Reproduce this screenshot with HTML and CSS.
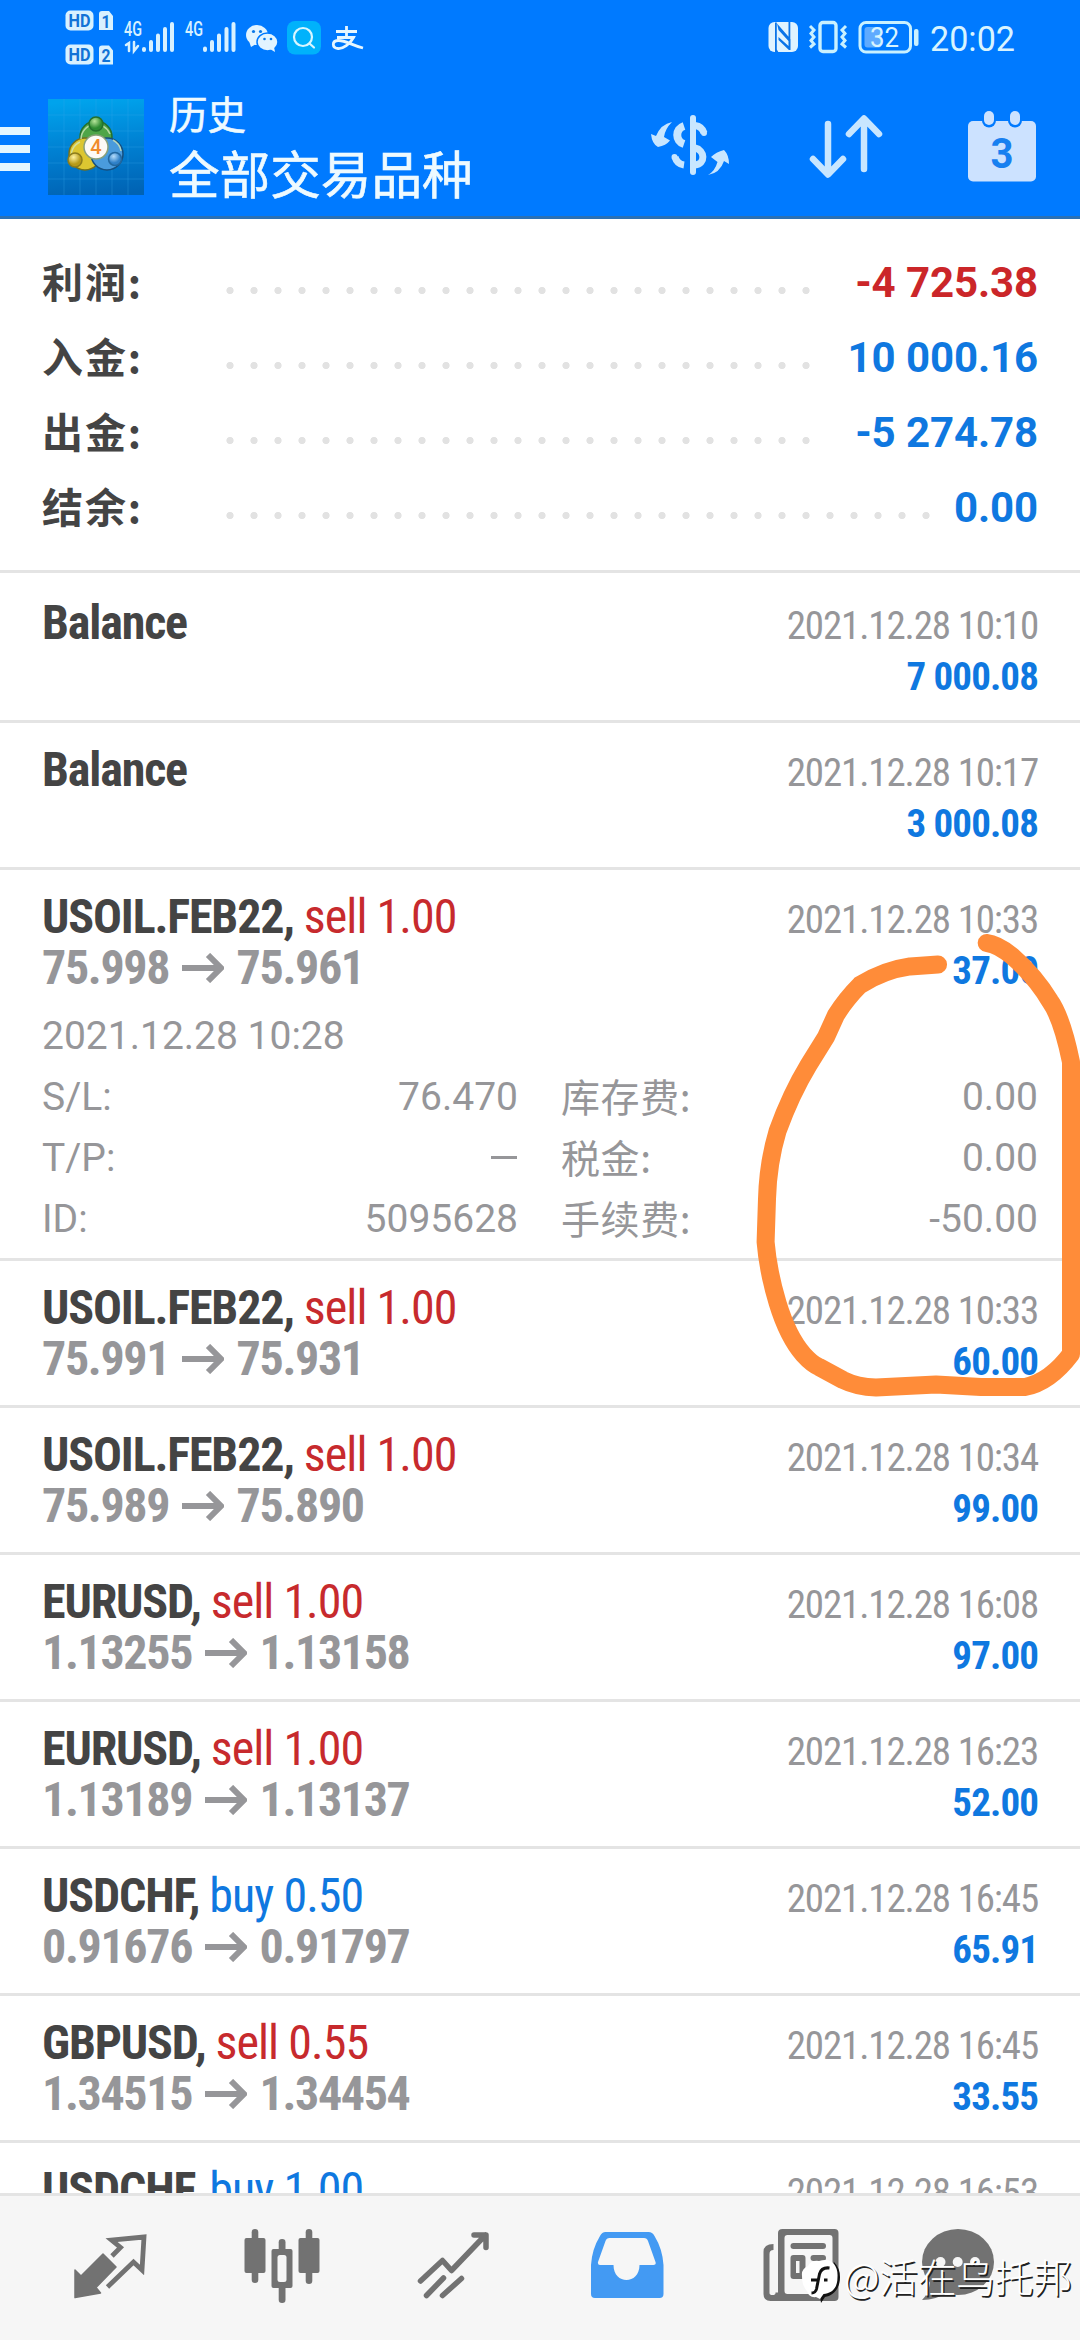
FILE: index.html
```html
<!DOCTYPE html>
<html lang="zh-CN">
<head>
<meta charset="utf-8">
<title>历史</title>
<link rel="stylesheet" href="styles.css">
</head>
<body>
<div class="app">
  <header class="top">
    <div class="status">
      <svg class="status-left" viewBox="0 0 370 76" width="370" height="76">
        <g fill="#d8f1ff">
          <rect x="65.500" y="10.500" width="28" height="20" rx="5"/>
          <rect x="65.500" y="44.500" width="28" height="20" rx="5"/>
          <path d="M102 11h7l4 5v14h-14v-16q0-3 3-3zM102 45.500h7l4 5v14h-14v-16q0-3 3-3z"/>
        </g>
        <g class="st-badge">
          <text x="68.500" y="27" textLength="22" lengthAdjust="spacingAndGlyphs">HD</text>
          <text x="68.500" y="61" textLength="22" lengthAdjust="spacingAndGlyphs">HD</text>
          <text x="101.500" y="27.500" textLength="9" lengthAdjust="spacingAndGlyphs">1</text>
          <text x="101.500" y="61.500" textLength="9" lengthAdjust="spacingAndGlyphs">2</text>
        </g>
        <g class="st-net">
          <text x="124" y="36" textLength="18" lengthAdjust="spacingAndGlyphs">4G</text>
          <text x="185" y="36" textLength="18" lengthAdjust="spacingAndGlyphs">4G</text>
        </g>
        <g stroke="#d8f1ff" stroke-width="4" stroke-linecap="round" fill="none">
          <path d="M144 49v1M151 42v8M158 35.500v14.500M165 29v21M172 24v26"/>
          <path d="M205 48.500v1.500M212 42v8M219 35.500v14.500M226.500 29v21M233.500 24v26"/>
          <path stroke-width="2.500" d="M126 45l3-2v8M134 42v9l4-5"/>
        </g>
        <g fill="#e2f4ff">
          <ellipse cx="257" cy="35" rx="11" ry="10"/><path d="M249 41l2 6 5-3z"/>
          <ellipse cx="267.500" cy="42" rx="10.500" ry="9" stroke="#007aff" stroke-width="1.500"/><path d="M270 49l5 3-1-5z"/>
        </g>
        <g fill="#0a78e8"><circle cx="253.500" cy="31.500" r="1.600"/><circle cx="260.500" cy="31.500" r="1.600"/><circle cx="264.500" cy="39" r="1.300"/><circle cx="271" cy="39" r="1.300"/></g>
        <rect x="287" y="21" width="34" height="33.500" rx="8" fill="#00b2fb"/>
        <g fill="none" stroke="#d8f6ff" stroke-width="2.200" stroke-linecap="round"><circle cx="303" cy="37" r="9"/><path d="M309.500 43.500l4.500 4"/></g>
        <g fill="none" stroke="#e6f6ff" stroke-width="2.800"><path d="M336 31.500h21M346.500 26v11M337 37.500h16.500C350 44 343 49 338 48.500c-6-.500-6.500-7.500 0-8 7-.500 13 4.500 25 7.500"/></g>
      </svg>
      <svg class="status-right" viewBox="760 0 320 76" width="320" height="76">
        <rect x="768.500" y="22" width="29.500" height="30" rx="6" fill="#dff3ff"/>
        <path fill="#0a74e8" d="M775 22.500h1.800v27l1.500 2.500h-3.300zM777 23.500l13.500 15.500v11h-1.600l-10.400-10v-3l10 9v-5l-10-11zM788.500 22h1.800v24h-1.800z"/>
        <g fill="none" stroke="#c9f1ff">
          <rect x="820" y="22.500" width="16" height="29" rx="3" stroke-width="3.400"/>
          <path stroke-width="3" d="M810 26l4 4-3 3.500 3 3.500-3 3.500 3 3.500-4 3.500M846 26l-4 4 3 3.500-3 3.500 3 3.500-3 3.500 4 3.500"/>
          <rect x="860" y="22.500" width="50.500" height="29.500" rx="6" stroke-width="3"/>
        </g>
        <rect x="864.500" y="27" width="17" height="20.500" rx="3" fill="#5fabff"/>
        <rect x="914" y="29" width="4.500" height="17" rx="2" fill="#c9f1ff"/>
        <text class="st-batt" x="870" y="46.500" textLength="29" lengthAdjust="spacingAndGlyphs">32</text>
        <text class="st-time" x="930" y="51" textLength="85" lengthAdjust="spacingAndGlyphs">20:02</text>
      </svg>
    </div>
    <div class="toolbar">
      <div class="burger"><i></i><i></i><i></i></div>
      <svg class="logo" viewBox="0 0 96 96" width="96" height="96">
        <defs>
          <linearGradient id="sky" x1=".5" y1="0" x2=".6" y2="1"><stop offset="0" stop-color="#00a3ec"/><stop offset=".5" stop-color="#0080d2"/><stop offset="1" stop-color="#0063b4"/></linearGradient>
          <radialGradient id="gr" cx=".4" cy=".3"><stop offset="0" stop-color="#b6e59a"/><stop offset="1" stop-color="#2e8b32"/></radialGradient>
          <radialGradient id="ye" cx=".4" cy=".3"><stop offset="0" stop-color="#fff3a0"/><stop offset="1" stop-color="#b79a18"/></radialGradient>
          <radialGradient id="bl" cx=".4" cy=".3"><stop offset="0" stop-color="#b5dcfa"/><stop offset="1" stop-color="#2e80c8"/></radialGradient>
        </defs>
        <rect width="96" height="96" fill="url(#sky)"/>
        <path d="M0 16h96M0 32h96M0 48h96M0 64h96M0 80h96M16 0v96M32 0v96M48 0v96M64 0v96M80 0v96" stroke="#36a9e8" stroke-opacity=".3" fill="none"/>
        <g stroke-width="1.500">
          <circle cx="48" cy="38" r="16" fill="#4fa548" stroke="#24702d"/>
          <circle cx="37" cy="55" r="16" fill="#dcc631" stroke="#75701b"/>
          <circle cx="59" cy="55" r="16" fill="#4a9bdc" stroke="#164f7e"/>
          <path d="M33 40a15 15 0 0 1 29-5M24 60a14 14 0 0 1 8-17M73 52a15 15 0 0 0-8-11" stroke="#cfe6b8" stroke-width="1.500" fill="none" opacity=".8"/>
          <circle cx="48" cy="25" r="7" fill="url(#gr)" stroke="#24702d"/>
          <circle cx="27" cy="61" r="7" fill="url(#ye)" stroke="#8c7c1d"/>
          <circle cx="67" cy="60" r="6.500" fill="url(#bl)" stroke="#2368a0"/>
          <circle cx="48" cy="48" r="12" fill="#fdfaf6" stroke="#8aa07a"/>
        </g>
        <text class="logo-four" x="48" y="55" text-anchor="middle">4</text>
      </svg>
      <div class="titles">
        <div class="title-small">历史</div>
        <div class="title-big">全部交易品种</div>
      </div>
      <div class="actions">
        <svg viewBox="645 105 90 80" width="90" height="80">
          <g fill="none" stroke="#c8e6ff">
            <path d="M693 118v54" stroke-width="6" stroke-linecap="round"/>
            <path d="M684 126C675 129 675 141 684 144" stroke-width="8"/>
            <path d="M675 157q2 7 9 8" stroke-width="7"/>
            <path d="M674.500 157v.1M704 133v.1" stroke-width="6" stroke-linecap="round"/>
            <path d="M695 125.500q7 1 9 7.500" stroke-width="7"/>
            <path d="M695 148c10 2 11 16 0 17" stroke-width="7"/>
          </g>
          <path fill="#c8e6ff" d="M651 134l5 2q5-12 16-14-7 7-8 15l6 3.500q-4 5-12 6.500-6-3-7-13zM708 175q7-4 9.500-13l-6.500-5q5-5 13-7 5 5 5 14l-5-3q-4 12-16 14z"/>
        </svg>
        <svg viewBox="800 105 90 80" width="90" height="80">
          <path fill="none" stroke="#c8e6ff" stroke-width="6.500" stroke-linecap="round" stroke-linejoin="round" d="M828 124v49M813 159l15 15.500 15-15.500M864 169v-49M849 134l15-15.500 15 15.500"/>
        </svg>
        <svg viewBox="960 105 90 80" width="90" height="80">
          <rect x="968" y="121" width="68" height="60.500" rx="5" fill="#cce2ff"/>
          <rect x="982" y="109" width="14" height="18.500" rx="7" fill="#007aff"/><rect x="1008" y="109" width="14" height="18.500" rx="7" fill="#007aff"/>
          <rect x="984" y="111" width="10" height="14" rx="5" fill="#cce2ff"/><rect x="1010" y="111" width="10" height="14" rx="5" fill="#cce2ff"/>
          <text class="cal-day" x="1002" y="168" text-anchor="middle" textLength="23" lengthAdjust="spacingAndGlyphs">3</text>
        </svg>
      </div>
    </div>
  </header>

  <section class="summary">
    <div class="sum-row"><span class="sum-label">利润:</span><span class="dots"></span><span class="sum-val neg">-4 725.38</span></div>
    <div class="sum-row"><span class="sum-label">入金:</span><span class="dots"></span><span class="sum-val">10 000.16</span></div>
    <div class="sum-row"><span class="sum-label">出金:</span><span class="dots"></span><span class="sum-val">-5 274.78</span></div>
    <div class="sum-row"><span class="sum-label">结余:</span><span class="dots long"></span><span class="sum-val">0.00</span></div>
  </section>

  <main class="deals">
    <article class="deal first">
      <div class="line"><span class="sym">Balance</span><span class="date">2021.12.28 10:10</span></div>
      <div class="line"><span></span><span class="profit">7 000.08</span></div>
    </article>
    <article class="deal">
      <div class="line"><span class="sym">Balance</span><span class="date">2021.12.28 10:17</span></div>
      <div class="line"><span></span><span class="profit">3 000.08</span></div>
    </article>
    <article class="deal open">
      <div class="line"><span class="sym">USOIL.FEB22, <span class="sell">sell 1.00</span></span><span class="date">2021.12.28 10:33</span></div>
      <div class="line"><span class="price">75.998 <svg class="arr" viewBox="0 0 42 30"><path d="M0 15h38M26 2l13 13-13 13"/></svg> 75.961</span><span class="profit">37.00</span></div>
      <div class="detail">
        <span class="wide">2021.12.28 10:28</span>
        <span>S/L:</span><span class="num">76.470</span><span class="fee">库存费:</span><span class="num">0.00</span>
        <span>T/P:</span><span class="num"><i class="dash"></i></span><span class="fee">税金:</span><span class="num">0.00</span>
        <span>ID:</span><span class="num">5095628</span><span class="fee">手续费:</span><span class="num">-50.00</span>
      </div>
    </article>
    <article class="deal">
      <div class="line"><span class="sym">USOIL.FEB22, <span class="sell">sell 1.00</span></span><span class="date">2021.12.28 10:33</span></div>
      <div class="line"><span class="price">75.991 <svg class="arr" viewBox="0 0 42 30"><path d="M0 15h38M26 2l13 13-13 13"/></svg> 75.931</span><span class="profit">60.00</span></div>
    </article>
    <article class="deal">
      <div class="line"><span class="sym">USOIL.FEB22, <span class="sell">sell 1.00</span></span><span class="date">2021.12.28 10:34</span></div>
      <div class="line"><span class="price">75.989 <svg class="arr" viewBox="0 0 42 30"><path d="M0 15h38M26 2l13 13-13 13"/></svg> 75.890</span><span class="profit">99.00</span></div>
    </article>
    <article class="deal">
      <div class="line"><span class="sym">EURUSD, <span class="sell">sell 1.00</span></span><span class="date">2021.12.28 16:08</span></div>
      <div class="line"><span class="price">1.13255 <svg class="arr" viewBox="0 0 42 30"><path d="M0 15h38M26 2l13 13-13 13"/></svg> 1.13158</span><span class="profit">97.00</span></div>
    </article>
    <article class="deal">
      <div class="line"><span class="sym">EURUSD, <span class="sell">sell 1.00</span></span><span class="date">2021.12.28 16:23</span></div>
      <div class="line"><span class="price">1.13189 <svg class="arr" viewBox="0 0 42 30"><path d="M0 15h38M26 2l13 13-13 13"/></svg> 1.13137</span><span class="profit">52.00</span></div>
    </article>
    <article class="deal">
      <div class="line"><span class="sym">USDCHF, <span class="buy">buy 0.50</span></span><span class="date">2021.12.28 16:45</span></div>
      <div class="line"><span class="price">0.91676 <svg class="arr" viewBox="0 0 42 30"><path d="M0 15h38M26 2l13 13-13 13"/></svg> 0.91797</span><span class="profit">65.91</span></div>
    </article>
    <article class="deal">
      <div class="line"><span class="sym">GBPUSD, <span class="sell">sell 0.55</span></span><span class="date">2021.12.28 16:45</span></div>
      <div class="line"><span class="price">1.34515 <svg class="arr" viewBox="0 0 42 30"><path d="M0 15h38M26 2l13 13-13 13"/></svg> 1.34454</span><span class="profit">33.55</span></div>
    </article>
    <article class="deal">
      <div class="line"><span class="sym">USDCHF, <span class="buy">buy 1.00</span></span><span class="date">2021.12.28 16:53</span></div>
    </article>
  </main>

  <nav class="tabs">
    <svg viewBox="65 2220 90 90"><path fill="#727272" stroke="#727272" stroke-width="1.500" stroke-linejoin="round" d="M75 2270l6 6 22-22 13 13-20 20.500 4.500 5.500-25.500 4.500z"/><path fill="none" stroke="#727272" stroke-width="4.800" d="M112 2256l8.500-8.500-9-7.500 32.500-3-2 33-8.500-8-26 25"/></svg>
    <svg viewBox="236.500 2220 90 90"><g fill="#727272"><rect x="251.200" y="2229" width="6.600" height="54" rx="3.300"/><rect x="244" y="2238" width="21" height="35" rx="2"/><rect x="278.200" y="2239" width="6.800" height="64" rx="3.300"/><rect x="271" y="2249" width="21" height="39" rx="2"/><rect x="305.200" y="2229" width="6.600" height="55" rx="3.300"/><rect x="298" y="2238" width="21" height="35" rx="2"/></g><rect x="277" y="2255" width="9" height="27" rx="2.500" fill="#f6f6f6"/></svg>
    <svg viewBox="409 2220 90 90"><path fill="none" stroke="#727272" stroke-width="5.500" stroke-linecap="round" stroke-linejoin="round" d="M420.500 2281l22-20.500 9 10 34-35.500M474 2235h12v12.500M426.500 2295.500l17-17.500M442.500 2295.500l19-17"/></svg>
    <svg viewBox="581.500 2220 90 90"><path fill="#439af3" fill-rule="evenodd" d="M605 2232h43q4 0 6 4 8 13 9 29v29q0 4-4 4h-64.500q-4 0-4-4v-29q1-16 9-29 2-4 5.500-4zM609 2238q-3 0-4 3l-7.500 21q-.5 3 2 3h13.500c0 20 26 20 26 0h14q3 0 2-3l-7.500-21q-1-3-4-3z"/></svg>
    <svg viewBox="755.500 2220 90 90"><g fill="#727272"><path fill-rule="evenodd" d="M782 2229h52q4 0 4 4v64q0 4-4 4h-64q-7 0-7-7v-42q0-8 10-8v6q-4 0-4 4v39q0 2 3 2t3-2v-.5h2.500V2233q0-4 4.500-4zM787 2235q-3 0-3 3v53q0 3 3 3h42q3 0 3-3v-53q0-3-3-3z"/><rect x="790" y="2243" width="35.500" height="6" rx="3"/><path fill-rule="evenodd" d="M793 2255h9q3 0 3 3v18q0 3-3 3h-9q-3 0-3-3v-18q0-3 3-3zM795.500 2261v12h3.500v-12z"/><rect x="810" y="2255" width="15.500" height="6" rx="3"/></g></svg>
    <svg viewBox="913 2220 90 90"><ellipse cx="958" cy="2262" rx="36" ry="33" fill="#727272"/><path fill="#727272" d="M930 2280q0 12-8 20 14 0 26-8z"/><g fill="#f6f6f6"><circle cx="940.500" cy="2262" r="5"/><circle cx="957.700" cy="2262" r="5"/><circle cx="975" cy="2262" r="5"/></g></svg>
  </nav>

  <div class="watermark">
    <svg viewBox="800 2256 42 48" width="42" height="48">
      <path fill="#111" d="M834 2262q6 6 6 15c0 13-8 19-15 20l-4 6-1-7z"/>
      <path fill="#fff" d="M802 2276q-1-7 6-10 3-6 11-5 10-3 15 3 4 5 3.500 13c0 12-6 16-14 17l-3.500 5-4-2q-7 1-9-6-5-5-5-15z"/>
      <path fill="none" stroke="#111" stroke-width="3" d="M829.500 2268q-8-1-10 6l-3 15q-1 4-5 4M811 2280h8M824 2280h3.500"/>
    </svg>
    <span>@活在乌托邦</span>
  </div>

  <svg class="scribble" viewBox="740 920 340 480" width="340" height="480">
    <path d="M938 964.600L910 966.400Q884 970 860 985Q846 999 836 1015L826 1037L808.600 1065Q791 1094 777.600 1131Q768 1163 767 1199L765.600 1242Q768 1271 777.600 1303Q788 1337 803.500 1354.600Q812 1364 819 1367L843 1380Q857 1387 876 1387.500L936 1384.600L981 1387H1025Q1050 1382 1071 1354V1062Q1062 1018 1050 1001Q1035 976 1012 956Q997 944 986.700 943"/>
  </svg>
</div>
</body>
</html>
```

FILE: styles.css
```css
* { box-sizing: border-box; }

body {
  margin: 0;
  background: #fff;
  font-family: "Roboto", "Noto Sans CJK SC", sans-serif;
}

.app {
  position: relative;
  display: flex;
  flex-direction: column;
  width: 1080px;
  height: 2340px;
  overflow: hidden;
  background: #fff;
}

/* header */
.top {
  flex: none;
  height: 219px;
  background: #007aff;
  border-bottom: 3px solid #2b71b5;
}

.status { display: flex; justify-content: space-between; height: 76px; }
.status svg { display: block; }
.st-badge { font: 700 19px "Roboto", sans-serif; fill: #1273d6; }
.st-net { font: 500 20px "Roboto", sans-serif; fill: #d8f1ff; }
.st-batt { font: 400 27px "Roboto", sans-serif; fill: #d8f4ff; }
.st-time { font: 400 35px "Roboto", sans-serif; fill: #d8f4ff; }

.toolbar { display: flex; height: 140px; }
.burger { display: flex; flex-direction: column; gap: 10px; width: 48px; padding-top: 51px; }
.burger i { width: 30px; height: 8px; background: #e4f6ff; }
.logo { display: block; margin-top: 23px; }
.logo-four { font: 500 20px "Roboto", sans-serif; fill: #f08b2c; }
.titles {
  margin-left: 25px;
  color: #eefaff;
  font-family: "Noto Sans CJK SC", sans-serif;
  white-space: nowrap;
  -webkit-text-stroke: 0.6px #eefaff;
}
.title-small { margin-top: 11px; font-size: 38.5px; line-height: 50px; }
.title-big { font-size: 50.6px; line-height: 70px; }
.actions { display: flex; gap: 65px; margin: 29px 30px 0 auto; }
.actions svg:last-child { margin-left: 5px; }
.cal-day { font: 700 43px "Roboto", sans-serif; fill: #1880f0; }

/* totals */
.summary {
  flex: none;
  height: 354px;
  padding: 26px 42px 0 42px;
  border-bottom: 3px solid #e4e4e4;
}
.sum-row { display: flex; height: 75px; font-size: 42px; line-height: 75px; font-weight: 700; white-space: nowrap; }
.sum-label { width: 176px; font-family: "Noto Sans CJK SC", sans-serif; font-size: 41px; line-height: 71px; letter-spacing: 1.9px; color: #444; }
.dots {
  width: 600px;
  height: 9px;
  margin-top: 41px;
  background: radial-gradient(circle at 12px 4.5px, #e2e2e2 3.2px, transparent 4px) 0 0 / 24px 9px repeat-x;
}
.dots.long { width: 720px; }
.sum-val { margin-left: auto; letter-spacing: -0.1px; color: #0f78e0; }
.sum-val.neg { color: #cb2629; }

/* deal list */
.deals { flex: 1; min-height: 0; overflow: hidden; }
.deal { height: 147px; padding: 21px 42px 0 42px; border-bottom: 3px solid #e4e4e4; }
.deal.first { height: 150px; padding-top: 24px; }
.deal.open { height: 391px; }
.line { display: flex; justify-content: space-between; height: 51px; line-height: 51px; white-space: nowrap; }
.sym, .price, .date, .profit { font-family: "Roboto Condensed", "Roboto", sans-serif; font-stretch: 75%; letter-spacing: -1.15px; }
.sym { font-size: 48px; font-weight: 700; color: #444; }
.sell, .buy { font-weight: 400; letter-spacing: -0.95px; }
.sell { color: #c72a2d; }
.buy { color: #0f78e0; }
.price { font-size: 48px; font-weight: 700; letter-spacing: -1.35px; color: #969699; }
.arr { width: 42px; height: 30px; margin: 0 3px; vertical-align: 1px; fill: none; stroke: #969699; stroke-width: 6; }
.date, .profit { padding-top: 4px; font-size: 39px; }
.date { color: #969699; }
.profit { font-weight: 700; letter-spacing: -0.9px; color: #0f78e0; }

.detail {
  display: grid;
  grid-template-columns: 150px 326px 244px 276px;
  grid-auto-rows: 61px;
  margin-top: 13px;
  font-size: 39px;
  font-weight: 400;
  line-height: 61px;
  color: #969699;
}
.wide { grid-column: 1 / -1; }
.num { text-align: right; }
.fee { padding-left: 43px; font-family: "Noto Sans CJK SC", sans-serif; line-height: 56px; letter-spacing: 0.6px; }
.dash { display: inline-block; width: 26px; height: 3px; margin-right: 1px; background: #969699; vertical-align: 12px; }

/* bottom tabs */
.tabs {
  display: grid;
  flex: none;
  grid-template-columns: 171.5px 172.5px 172.5px 174px 157.5px 90px;
  height: 147px;
  padding: 24px 0 0 65px;
  background: #f6f6f6;
  border-top: 3px solid #e4e4e4;
}
.tabs svg { width: 90px; height: 90px; }

.watermark {
  position: absolute;
  left: 800px;
  top: 2250px;
  display: flex;
  align-items: center;
  height: 60px;
  color: #fff;
  font: 300 39px/60px "Noto Sans CJK SC", sans-serif;
  text-shadow: 1.5px 1.5px 0 #222;
  white-space: nowrap;
}
.watermark span { margin: -10px 0 0 2px; letter-spacing: -0.5px; }

.scribble { position: absolute; left: 740px; top: 920px; pointer-events: none; }
.scribble path { fill: none; stroke: #ff8c39; stroke-width: 18; stroke-linecap: round; stroke-linejoin: round; }
```
